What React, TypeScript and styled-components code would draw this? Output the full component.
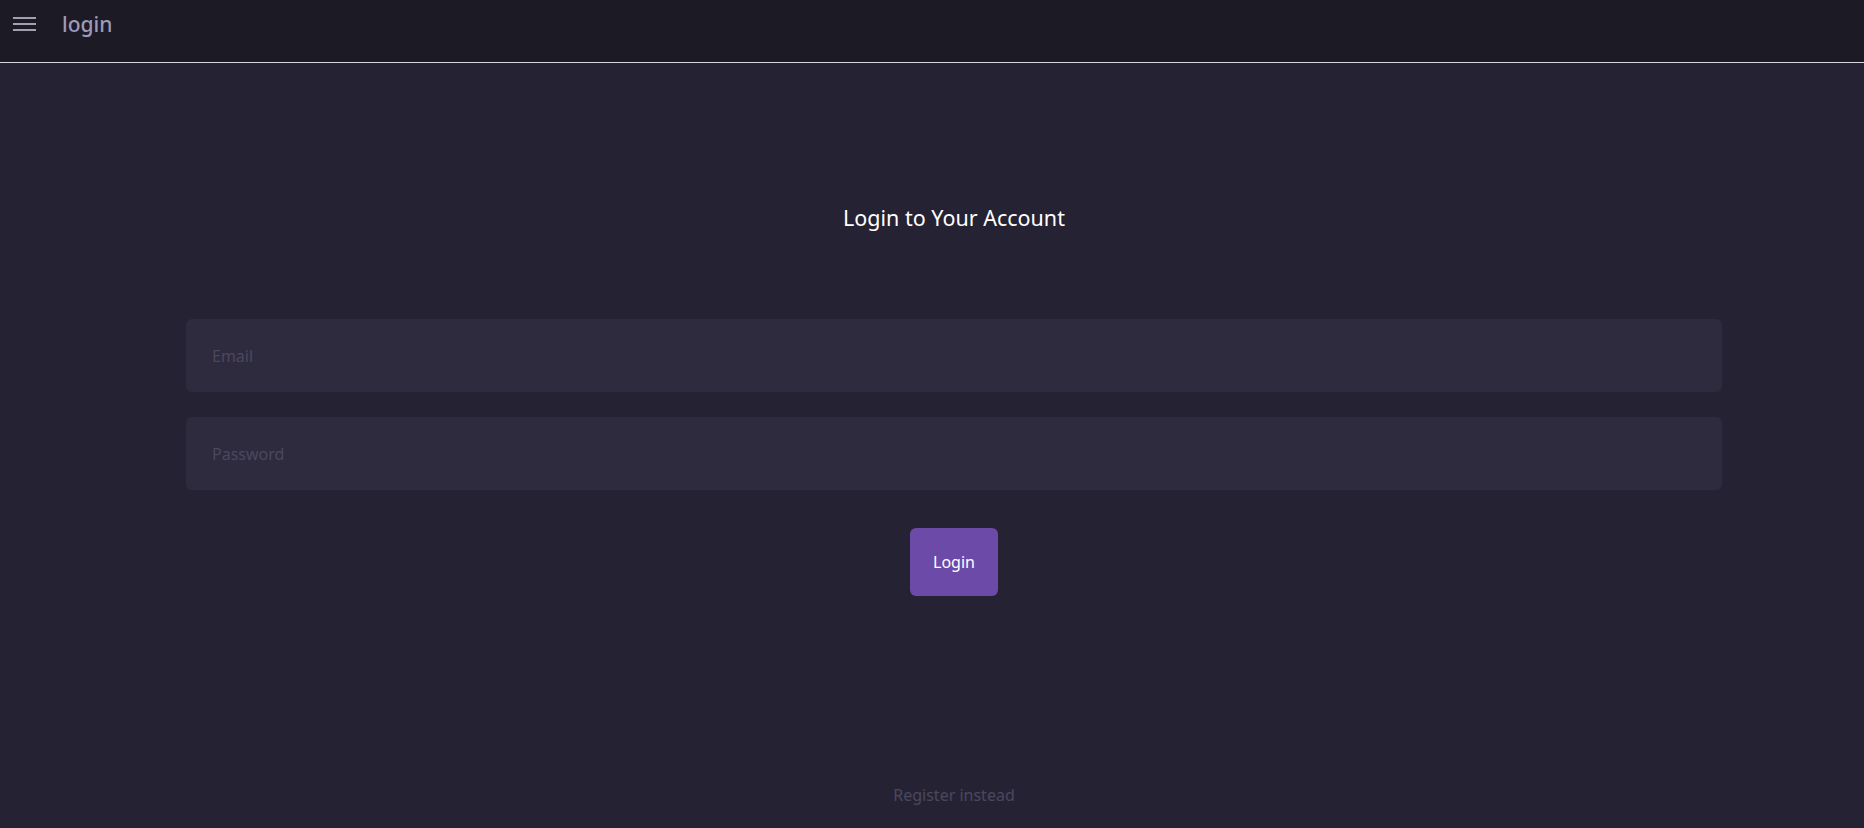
import React from "react";
import styled, { createGlobalStyle } from "styled-components";

const Global = createGlobalStyle`
  html, body { margin: 0; padding: 0; background: #252333; }
  body { font-family: "Noto Sans", "Open Sans", sans-serif; }
  * { box-sizing: border-box; }
`;

const Page = styled.div`
  width: 100%;
  height: 828px;
  display: flex;
  flex-direction: column;
  background: #252333;
  overflow: hidden;
`;

const TopBar = styled.header`
  height: 63px;
  flex: none;
  background: #1c1a25;
  border-bottom: 1px solid #d8d6e0;
  display: flex;
  align-items: flex-start;
  padding: 11px 0 0 13px;
  gap: 25px;
`;

const MenuButton = styled.button`
  background: none;
  border: none;
  padding: 0;
  margin-top: 3px;
  width: 24px;
  height: 20px;
  display: flex;
  cursor: pointer;
`;

const PageTitle = styled.span`
  font-size: 21px;
  font-weight: 500;
  color: #9d9ab8;
  line-height: 26px;
`;

const Main = styled.main`
  flex: 1;
  display: flex;
  flex-direction: column;
  align-items: center;
  padding: 0 142px 0 186px;
`;

const Heading = styled.h1`
  margin: 141px 0 0;
  font-size: 21.5px;
  font-weight: 400;
  color: #ffffff;
  line-height: 28px;
`;

const Form = styled.form`
  width: 100%;
  display: flex;
  flex-direction: column;
  align-items: center;
  gap: 25px;
  margin-top: 87px;
`;

const Field = styled.input`
  width: 100%;
  height: 73px;
  border: none;
  outline: none;
  border-radius: 6px;
  background: #2f2b3e;
  padding: 0 26px;
  font-family: inherit;
  font-size: 16px;
  color: #d0cde0;
  &::placeholder { color: #4b475f; }
`;

const Submit = styled.button`
  margin-top: 13px;
  width: 88px;
  height: 68px;
  border: none;
  border-radius: 6px;
  background: #6b4aa8;
  color: #ffffff;
  font-family: inherit;
  font-size: 16px;
  cursor: pointer;
`;

const RegisterLink = styled.a`
  margin-top: auto;
  margin-bottom: 22px;
  font-size: 16px;
  color: #4b475f;
  text-decoration: none;
  cursor: pointer;
`;

export default function App() {
  return (
    <>
      <Global />
      <Page>
        <TopBar>
          <MenuButton aria-label="menu">
            <svg width="24" height="20" viewBox="0 0 24 20">
              <rect x="0" y="3" width="23" height="2" fill="#a19fb0" />
              <rect x="0" y="9" width="23" height="2" fill="#a19fb0" />
              <rect x="0" y="15" width="23" height="2" fill="#a19fb0" />
            </svg>
          </MenuButton>
          <PageTitle>login</PageTitle>
        </TopBar>
        <Main>
          <Heading>Login to Your Account</Heading>
          <Form onSubmit={(e) => e.preventDefault()}>
            <Field type="email" placeholder="Email" />
            <Field type="password" placeholder="Password" />
            <Submit type="submit">Login</Submit>
          </Form>
          <RegisterLink>Register instead</RegisterLink>
        </Main>
      </Page>
    </>
  );
}
